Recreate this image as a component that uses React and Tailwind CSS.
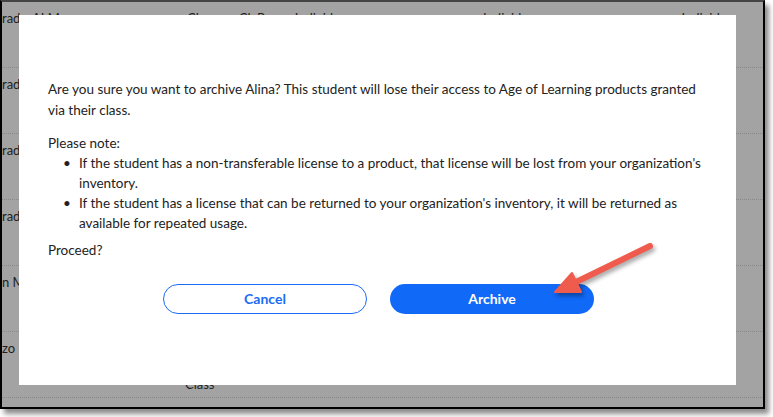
const rows = [
  { left: "rade", mid: "" },
  { left: "rade", mid: "" },
  { left: "rade", mid: "" },
  { left: "rade", mid: "" },
  { left: "n Mo", mid: "" },
  { left: "zo", mid: "Class" },
];

function Arrow() {
  return (
    <svg
      className="absolute left-0 top-0 pointer-events-none"
      width="773"
      height="417"
      style={{ filter: "drop-shadow(2px 3px 2px rgba(0,0,0,0.35))" }}
    >
      <line x1="650" y1="246" x2="574" y2="283" stroke="#ef5b4c" strokeWidth="6" strokeLinecap="round" />
      <polygon points="555,292 572,273 581,292" fill="#ef5b4c" stroke="#ef5b4c" strokeWidth="2" strokeLinejoin="round" />
    </svg>
  );
}

export default function App() {
  return (
    <div className="relative w-[773px] h-[417px] bg-white overflow-hidden" style={{ fontFamily: "Lato, 'Open Sans', sans-serif" }}>
      {/* screenshot frame */}
      <div className="relative w-[765px] h-[409px] border-2 border-t-[#444] border-black bg-[#a3a3a3] shadow-[4px_5px_5px_rgba(0,0,0,0.45)] overflow-hidden">
        {/* table behind the overlay */}
        <div className="flex flex-col">
          {rows.map((r, i) => (
            <div key={i} className="h-[66px] border-b border-dotted border-[#888] text-[13px] leading-[16px] text-[#1e1e1e] relative">
              <span className="absolute left-0 top-[8px]">{r.left}</span>
              {i === 0 && (
                <div className="absolute left-[30px] top-[8px] flex">
                  <span>AI Mo</span>
                  <span className="ml-[120px]">Cl</span>
                  <span className="ml-[40px]">Cl. P</span>
                  <span className="ml-[30px]">Individ</span>
                  <span className="ml-[150px]">Individ</span>
                  <span className="ml-[160px]">Individ</span>
                </div>
              )}
              {r.mid && <span className="absolute left-[183px] top-[44px]">{r.mid}</span>}
            </div>
          ))}
        </div>

        {/* modal */}
        <div className="absolute left-[17px] top-[13px] w-[717px] h-[370px] bg-white text-[#222] text-[13.5px] leading-[20px] pl-[29px] pr-[30px] pt-[64px]">
          <p className="leading-[21px]">
            Are you sure you want to archive Alina? This student will lose their access to Age of Learning products granted via their class.
          </p>
          <p className="mt-[12px]">Please note:</p>
          <ul className="pl-[15px]">
            <li className="flex">
              <span className="w-[16px] shrink-0">•</span>
              <span>If the student has a non-transferable license to a product, that license will be lost from your organization's inventory.</span>
            </li>
            <li className="flex">
              <span className="w-[16px] shrink-0">•</span>
              <span>If the student has a license that can be returned to your organization's inventory, it will be returned as available for repeated usage.</span>
            </li>
          </ul>
          <p className="mt-[7px]">Proceed?</p>
          <div className="flex gap-[23px] mt-[24px] ml-[115px]">
            <button className="w-[204px] h-[30px] rounded-full border border-[#1a6cf6] text-[#1a6cf6] font-bold text-[14px]">Cancel</button>
            <button className="w-[204px] h-[30px] rounded-full bg-[#1169f7] text-white font-bold text-[14px]">Archive</button>
          </div>
        </div>
      </div>
      <Arrow />
    </div>
  );
}
